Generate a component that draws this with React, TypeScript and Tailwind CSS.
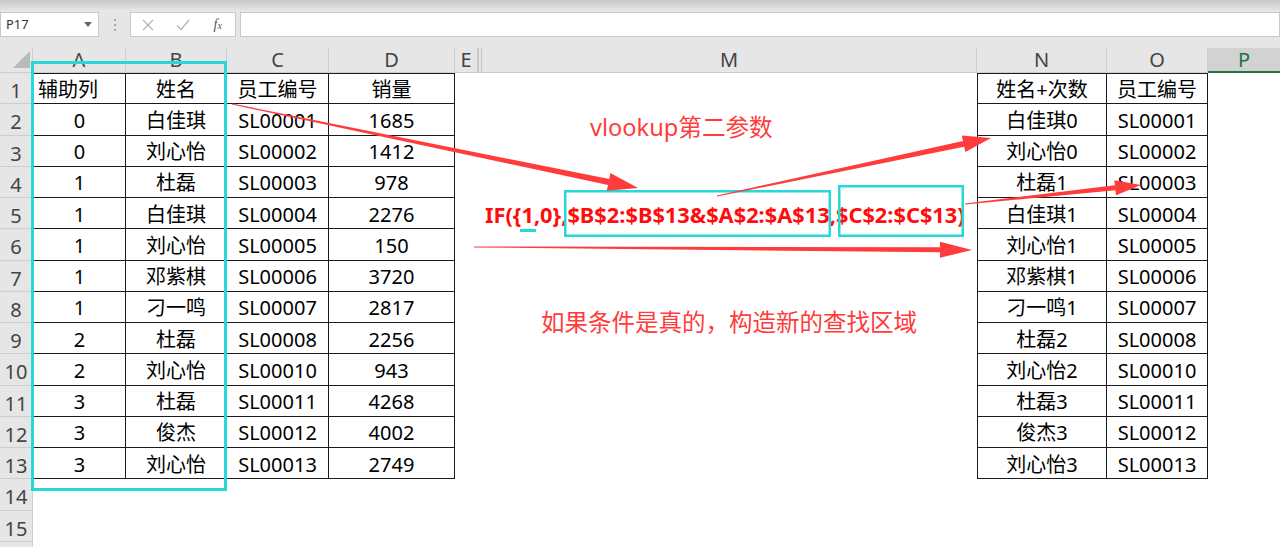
import React from "react";

type Col = { k: string; w: string };

const cols: Col[] = [
  { k: "A", w: "w-[93px]" },
  { k: "B", w: "w-[101px]" },
  { k: "C", w: "w-[102px]" },
  { k: "D", w: "w-[126px]" },
  { k: "E", w: "w-[23px]" },
  { k: "hid", w: "w-[4px]" },
  { k: "M", w: "w-[495px]" },
  { k: "N", w: "w-[130px]" },
  { k: "O", w: "w-[101px]" },
  { k: "P", w: "w-[72px]" },
];

const dataA = ["辅助列", "0", "0", "1", "1", "1", "1", "1", "2", "2", "3", "3", "3"];
const dataB = ["姓名", "白佳琪", "刘心怡", "杜磊", "白佳琪", "刘心怡", "邓紫棋", "刁一鸣", "杜磊", "刘心怡", "杜磊", "俊杰", "刘心怡"];
const ids = ["员工编号", "SL00001", "SL00002", "SL00003", "SL00004", "SL00005", "SL00006", "SL00007", "SL00008", "SL00010", "SL00011", "SL00012", "SL00013"];
const dataD = ["销量", "1685", "1412", "978", "2276", "150", "3720", "2817", "2256", "943", "4268", "4002", "2749"];
const dataN = ["姓名+次数", "白佳琪0", "刘心怡0", "杜磊1", "白佳琪1", "刘心怡1", "邓紫棋1", "刁一鸣1", "杜磊2", "刘心怡2", "杜磊3", "俊杰3", "刘心怡3"];

function content(r: number, k: string): string {
  if (r > 13) return "";
  const i = r - 1;
  if (k === "A") return dataA[i];
  if (k === "B") return dataB[i];
  if (k === "C") return ids[i];
  if (k === "D") return dataD[i];
  if (k === "N") return dataN[i];
  if (k === "O") return ids[i];
  return "";
}

function cellClass(r: number, k: string): string {
  const parts: string[] = [];
  const left = ["A", "B", "C", "D"].includes(k);
  const right = ["N", "O"].includes(k);
  if (r <= 13 && (left || right)) {
    parts.push("border-r border-b border-[#1a1a1a]");
    if (k === "A" || k === "N") parts.push("border-l");
    if (r === 1) parts.push("border-t");
  }
  if (r === 1 && k === "A") parts.push("justify-start pl-[4px]");
  else parts.push("justify-center");
  return parts.join(" ");
}

function arrowPoints(
  x1: number,
  y1: number,
  x2: number,
  y2: number,
  w0: number,
  w1: number,
  hl: number,
  hw: number
): string {
  const dx = x2 - x1;
  const dy = y2 - y1;
  const len = Math.hypot(dx, dy);
  const ux = dx / len;
  const uy = dy / len;
  const nx = -uy;
  const ny = ux;
  const bx = x2 - ux * hl;
  const by = y2 - uy * hl;
  const pts: [number, number][] = [
    [x1 + (nx * w0) / 2, y1 + (ny * w0) / 2],
    [bx + (nx * w1) / 2, by + (ny * w1) / 2],
    [bx + (nx * hw) / 2, by + (ny * hw) / 2],
    [x2, y2],
    [bx - (nx * hw) / 2, by - (ny * hw) / 2],
    [bx - (nx * w1) / 2, by - (ny * w1) / 2],
    [x1 - (nx * w0) / 2, y1 - (ny * w0) / 2],
  ];
  return pts.map((p) => `${p[0].toFixed(1)},${p[1].toFixed(1)}`).join(" ");
}

function TopBar() {
  return (
    <div className="h-[48px] bg-[#e6e6e6]">
      <div className="h-[10px] bg-linear-to-b from-[#c8c8c8] to-[#e4e4e4]" />
      <div className="flex items-center h-[25px] mt-[2px]">
        <div className="w-[99px] h-[25px] bg-white border border-[#c9c9c9] flex items-center pl-[5px] pr-[6px]">
          <span className="text-[13px] text-[#333]">P17</span>
          <svg className="ml-auto" width="8" height="5" viewBox="0 0 8 5">
            <polygon points="0,0 8,0 4,5" fill="#666" />
          </svg>
        </div>
        <div className="w-[31px] flex flex-col items-center justify-center gap-[3px]">
          <div className="w-[2px] h-[2px] bg-[#a8a8a8]" />
          <div className="w-[2px] h-[2px] bg-[#a8a8a8]" />
          <div className="w-[2px] h-[2px] bg-[#a8a8a8]" />
        </div>
        <div className="w-[106px] h-[25px] bg-white border border-[#c9c9c9] flex items-center">
          <div className="w-[35px] flex justify-center">
            <svg width="12" height="12" viewBox="0 0 12 12">
              <path d="M1 1 L11 11 M11 1 L1 11" stroke="#b4b4b4" strokeWidth="1.3" />
            </svg>
          </div>
          <div className="w-[35px] flex justify-center">
            <svg width="14" height="12" viewBox="0 0 14 12">
              <path d="M1 6.5 L5 10.5 L13 1" stroke="#b4b4b4" strokeWidth="1.3" fill="none" />
            </svg>
          </div>
          <div className="w-[35px] flex justify-center">
            <span className="font-['Liberation_Serif',serif] italic text-[14px] text-[#555] leading-none">
              f<span className="text-[10px]">x</span>
            </span>
          </div>
        </div>
        <div className="w-[4px]" />
        <div className="flex-1 h-[25px] bg-white border border-[#c9c9c9]" />
      </div>
    </div>
  );
}

function HeaderRow() {
  return (
    <div className="flex h-[25px]">
      <div className="w-[33px] h-[25px] bg-[#e6e6e6] border-r border-b border-[#cdcdcd] relative">
        <svg className="absolute left-0 top-0" width="33" height="25" viewBox="0 0 33 25">
          <polygon points="30,3 30,20 13,20" fill="#b9b9b9" />
        </svg>
      </div>
      {cols.map((c) => {
        if (c.k === "hid") {
          return (
            <div key={c.k} className={`${c.w} h-[25px] bg-[#e6e6e6] border-l border-r border-b border-[#c4c4c4] shrink-0`} />
          );
        }
        if (c.k === "P") {
          return (
            <div
              key={c.k}
              className={`${c.w} h-[25px] bg-[#d2d2d2] border-b-2 border-[#217346] shrink-0 flex items-center justify-center text-[20px] leading-none text-[#217346]`}
            >
              P
            </div>
          );
        }
        return (
          <div
            key={c.k}
            className={`${c.w} h-[25px] bg-[#e6e6e6] border-r border-b border-[#cdcdcd] shrink-0 flex items-center justify-center text-[20px] leading-none text-[#444]`}
          >
            {c.k}
          </div>
        );
      })}
    </div>
  );
}

function BodyRow({ r }: { r: number }) {
  return (
    <div className="flex h-[31.25px]">
      <div className="w-[33px] h-[31.25px] shrink-0 bg-[#e6e6e6] border-r border-b border-[#cdcdcd] flex items-center justify-center pt-[6px] text-[20px] leading-none text-[#444]">
        {r <= 15 ? r : ""}
      </div>
      {cols.map((c) => {
        if (c.k === "M" && r === 5) {
          return (
            <div key={c.k} className={`${c.w} h-[31.25px] shrink-0 flex items-center pl-[3px] pt-[2px]`}>
              <span className="whitespace-nowrap font-bold text-[21.8px] leading-none text-[#ff0d0d]">
                IF({"{"}1,0{"}"},$B$2:$B$13&amp;$A$2:$A$13,$C$2:$C$13)
              </span>
            </div>
          );
        }
        return (
          <div
            key={c.k}
            className={`${c.w} h-[31.25px] shrink-0 flex items-center pt-[3px] text-[20px] leading-none text-black whitespace-nowrap ${cellClass(r, c.k)}`}
          >
            {content(r, c.k)}
          </div>
        );
      })}
    </div>
  );
}

export default function App() {
  const rows = Array.from({ length: 16 }, (_, i) => i + 1);
  const red = "#ff3b3b";
  const cyan = "#26d8d8";
  return (
    <div className="relative w-[1280px] h-[547px] overflow-hidden bg-white font-['Noto_Sans','Noto_Sans_CJK_SC',sans-serif]">
      <TopBar />
      <HeaderRow />
      {rows.map((r) => (
        <BodyRow key={r} r={r} />
      ))}

      <div className="absolute left-[590px] top-[111px] whitespace-nowrap text-[23.6px] leading-[32px] text-[#ff3b3b]">
        vlookup第二参数
      </div>
      <div className="absolute left-[541px] top-[306px] whitespace-nowrap text-[23.5px] leading-[32px] text-[#ff3b3b]">
        如果条件是真的，构造新的查找区域
      </div>

      <svg className="absolute left-0 top-0 pointer-events-none" width="1280" height="547" viewBox="0 0 1280 547">
        <rect x="32.5" y="62.5" width="193" height="427" fill="none" stroke={cyan} strokeWidth="3" />
        <rect x="565.25" y="191.25" width="264.5" height="44.5" fill="none" stroke={cyan} strokeWidth="2.5" />
        <rect x="839.25" y="186.25" width="123.5" height="49.5" fill="none" stroke={cyan} strokeWidth="2.5" />
        <rect x="520" y="229" width="16" height="3" fill={cyan} />
        <polygon points={arrowPoints(232, 104, 638, 188, 1, 6, 30, 18)} fill={red} />
        <polygon points={arrowPoints(717, 196, 991, 138, 1, 6, 28, 17)} fill={red} />
        <polygon points={arrowPoints(965, 204, 1141, 185, 1, 5, 26, 15)} fill={red} />
        <polygon points={arrowPoints(474, 247, 972, 250, 1, 5, 32, 16)} fill={red} />
      </svg>
    </div>
  );
}
